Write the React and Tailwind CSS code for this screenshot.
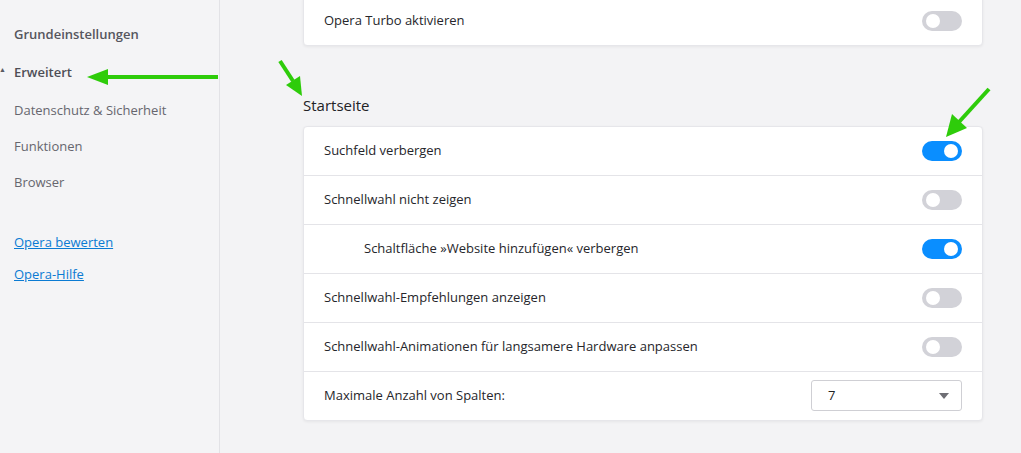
import React from "react";

function Toggle({ on }) {
  return (
    <div
      className={
        "relative w-[40px] h-[20px] rounded-full shrink-0 " +
        (on ? "bg-[#0a8eff]" : "bg-[#d2d2d8]")
      }
    >
      <div
        className={
          "absolute top-[3px] w-[14px] h-[14px] rounded-full bg-white " +
          (on ? "right-[4px]" : "left-[4px]")
        }
      />
    </div>
  );
}

function Row({ label, on, indent, last }) {
  return (
    <div
      className={
        "flex items-center justify-between h-[49px] pr-[20px] " +
        (indent ? "pl-[60px] " : "pl-[20px] ") +
        (last ? "" : "border-b border-[#e4e4e8]")
      }
    >
      <span className="text-[13px] text-[#26262b]">{label}</span>
      <Toggle on={on} />
    </div>
  );
}

export default function App() {
  return (
    <div
      className="relative flex h-[453px] w-[1021px] overflow-hidden bg-[#f3f3f5]"
      style={{ fontFamily: '"Open Sans", "Noto Sans", sans-serif' }}
    >
      {/* SIDEBAR */}
      <div className="w-[220px] shrink-0 border-r border-[#e2e2e6] bg-[#f4f4f6] pl-[14px] pt-[25px] text-[13px]">
        <div className="h-[38px] font-semibold text-[#56565e]">Grundeinstellungen</div>
        <div className="relative h-[38px] font-semibold text-[#4e4e56]">
          <span className="absolute left-[-15px] top-[2px] text-[7px] text-[#5a5a62]">▲</span>
          Erweitert
        </div>
        <div className="h-[36px] text-[#66666e]">Datenschutz &amp; Sicherheit</div>
        <div className="h-[36px] text-[#66666e]">Funktionen</div>
        <div className="h-[60px] text-[#66666e]">Browser</div>
        <div className="h-[32px]">
          <a className="text-[#0b7bd3] underline">Opera bewerten</a>
        </div>
        <div>
          <a className="text-[#0b7bd3] underline">Opera-Hilfe</a>
        </div>
      </div>

      {/* MAIN */}
      <div className="flex-1 pl-[83px]">
        <div className="w-[680px] mt-[-5px] bg-white rounded-[4px] border border-[#e6e6ea] shadow-[0_1px_3px_rgba(0,0,0,0.06)]">
          <Row label="Opera Turbo aktivieren" on={false} last />
        </div>

        <div className="mt-[48px] mb-[9px] text-[15px] text-[#222226]">Startseite</div>

        <div className="w-[680px] bg-white rounded-[4px] border border-[#e6e6ea] shadow-[0_1px_3px_rgba(0,0,0,0.06)]">
          <Row label="Suchfeld verbergen" on />
          <Row label="Schnellwahl nicht zeigen" on={false} />
          <Row label="Schaltfläche »Website hinzufügen« verbergen" on indent />
          <Row label="Schnellwahl-Empfehlungen anzeigen" on={false} />
          <Row label="Schnellwahl-Animationen für langsamere Hardware anpassen" on={false} />
          <div className="flex items-center justify-between h-[48px] pl-[20px] pr-[20px]">
            <span className="text-[13px] text-[#26262b]">Maximale Anzahl von Spalten:</span>
            <div className="flex items-center justify-between w-[151px] h-[31px] border border-[#cfcfd4] rounded-[3px] pl-[16px] pr-[12px]">
              <span className="text-[13px] text-[#222]">7</span>
              <svg width="10" height="6" viewBox="0 0 10 6">
                <path d="M0 0 L10 0 L5 6 Z" fill="#6e6e74" />
              </svg>
            </div>
          </div>
        </div>
      </div>

      {/* ANNOTATION ARROWS */}
      <svg className="absolute left-0 top-0 pointer-events-none" width="1021" height="453">
        <line x1="218" y1="77" x2="104" y2="77" stroke="#2ecc0a" strokeWidth="4" />
        <polygon points="87,77 108,69 108,85" fill="#2ecc0a" />
        <line x1="280" y1="61" x2="293" y2="81" stroke="#2ecc0a" strokeWidth="4" />
        <polygon points="302,96 286,85 300,76" fill="#2ecc0a" />
        <line x1="989" y1="89" x2="959" y2="122" stroke="#2ecc0a" strokeWidth="4" />
        <polygon points="946,137 952,114 967,128" fill="#2ecc0a" />
      </svg>
    </div>
  );
}
